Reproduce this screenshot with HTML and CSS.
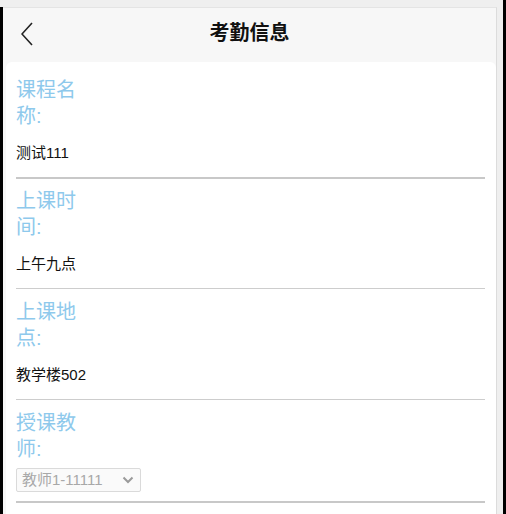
FILE: index.html
```html
<!DOCTYPE html>
<html lang="zh">
<head>
<meta charset="utf-8">
<title>考勤信息</title>
<link rel="stylesheet" href="styles.css">
</head>
<body>
<div class="shell">
  <div class="edge-left"></div>
  <div class="main">
    <div class="frame">
      <header class="header">
        <svg class="back" width="12" height="24" viewBox="0 0 12 24"><polyline points="11,1 1,12 11,23" fill="none" stroke="#222" stroke-width="1.6"/></svg>
        <h1 class="title">考勤信息</h1>
      </header>
      <div class="card">
        <div class="field first">
          <div class="label">课程名称:</div>
          <div class="value">测试111</div>
        </div>
        <div class="field">
          <div class="label">上课时间:</div>
          <div class="value">上午九点</div>
        </div>
        <div class="field">
          <div class="label">上课地点:</div>
          <div class="value">教学楼502</div>
        </div>
        <div class="field last">
          <div class="label">授课教师:</div>
          <div class="select">
            <span class="select-text">教师1-11111</span>
            <svg width="12" height="8" viewBox="0 0 12 8"><polyline points="1.5,1.5 6,6 10.5,1.5" fill="none" stroke="#9a9a9a" stroke-width="2"/></svg>
          </div>
        </div>
      </div>
    </div>
  </div>
  <div class="edge-right"></div>
</div>
</body>
</html>
```

FILE: styles.css
```css
html, body {
  margin: 0;
  padding: 0;
  height: 100%;
}
body {
  background: #efefef;
  font-family: "Liberation Sans", "Noto Sans CJK SC", sans-serif;
  overflow: hidden;
}
.shell {
  display: flex;
  height: 514px;
}
.edge-left {
  width: 3px;
  margin-top: 7px;
  background: #000;
}
.edge-right {
  width: 3px;
  background: #000;
}
.main {
  flex: 1;
  padding-top: 7px;
  padding-right: 6px;
  display: flex;
  flex-direction: column;
}
.frame {
  flex: 1;
  background: #f7f7f7;
  border-top: 1px solid #e4e4e4;
  border-right: 1px solid #dcdcdc;
  display: flex;
  flex-direction: column;
}
.header {
  height: 54px;
  display: flex;
  align-items: center;
  justify-content: center;
  padding-bottom: 4px;
  box-sizing: border-box;
  position: relative;
}
.back {
  position: absolute;
  left: 18px;
  top: 14px;
}
.title {
  margin: 0;
  font-size: 20px;
  font-weight: bold;
  color: #111;
  line-height: 26px;
}
.card {
  flex: 1;
  background: #fff;
  margin: 0 0 0 3px;
  border-radius: 6px 6px 0 0;
  padding: 0 11px 0 10px;
}
.field {
  padding-top: 10px;
  padding-bottom: 14px;
  border-bottom: 1px solid #cdcdcd;
}
.field.first {
  padding-top: 15px;
  border-bottom: 2px solid #c8c8c8;
}
.field.first + .field {
  padding-top: 9px;
}
.field.last {
  padding-bottom: 9px;
  border-bottom: 2px solid #c8c8c8;
}
.label {
  width: 62px;
  font-size: 20px;
  line-height: 26px;
  color: #8ec9ec;
}
.value {
  margin-top: 14px;
  font-size: 15px;
  line-height: 20px;
  color: #111;
}
.select {
  margin-top: 6px;
  width: 125px;
  height: 24px;
  box-sizing: border-box;
  border: 1px solid #dadada;
  border-radius: 2px;
  background: #fafafa;
  display: flex;
  align-items: center;
  justify-content: space-between;
  padding: 0 6px 0 5px;
}
.select-text {
  font-size: 15px;
  color: #a8a8a8;
  line-height: 20px;
}
```
